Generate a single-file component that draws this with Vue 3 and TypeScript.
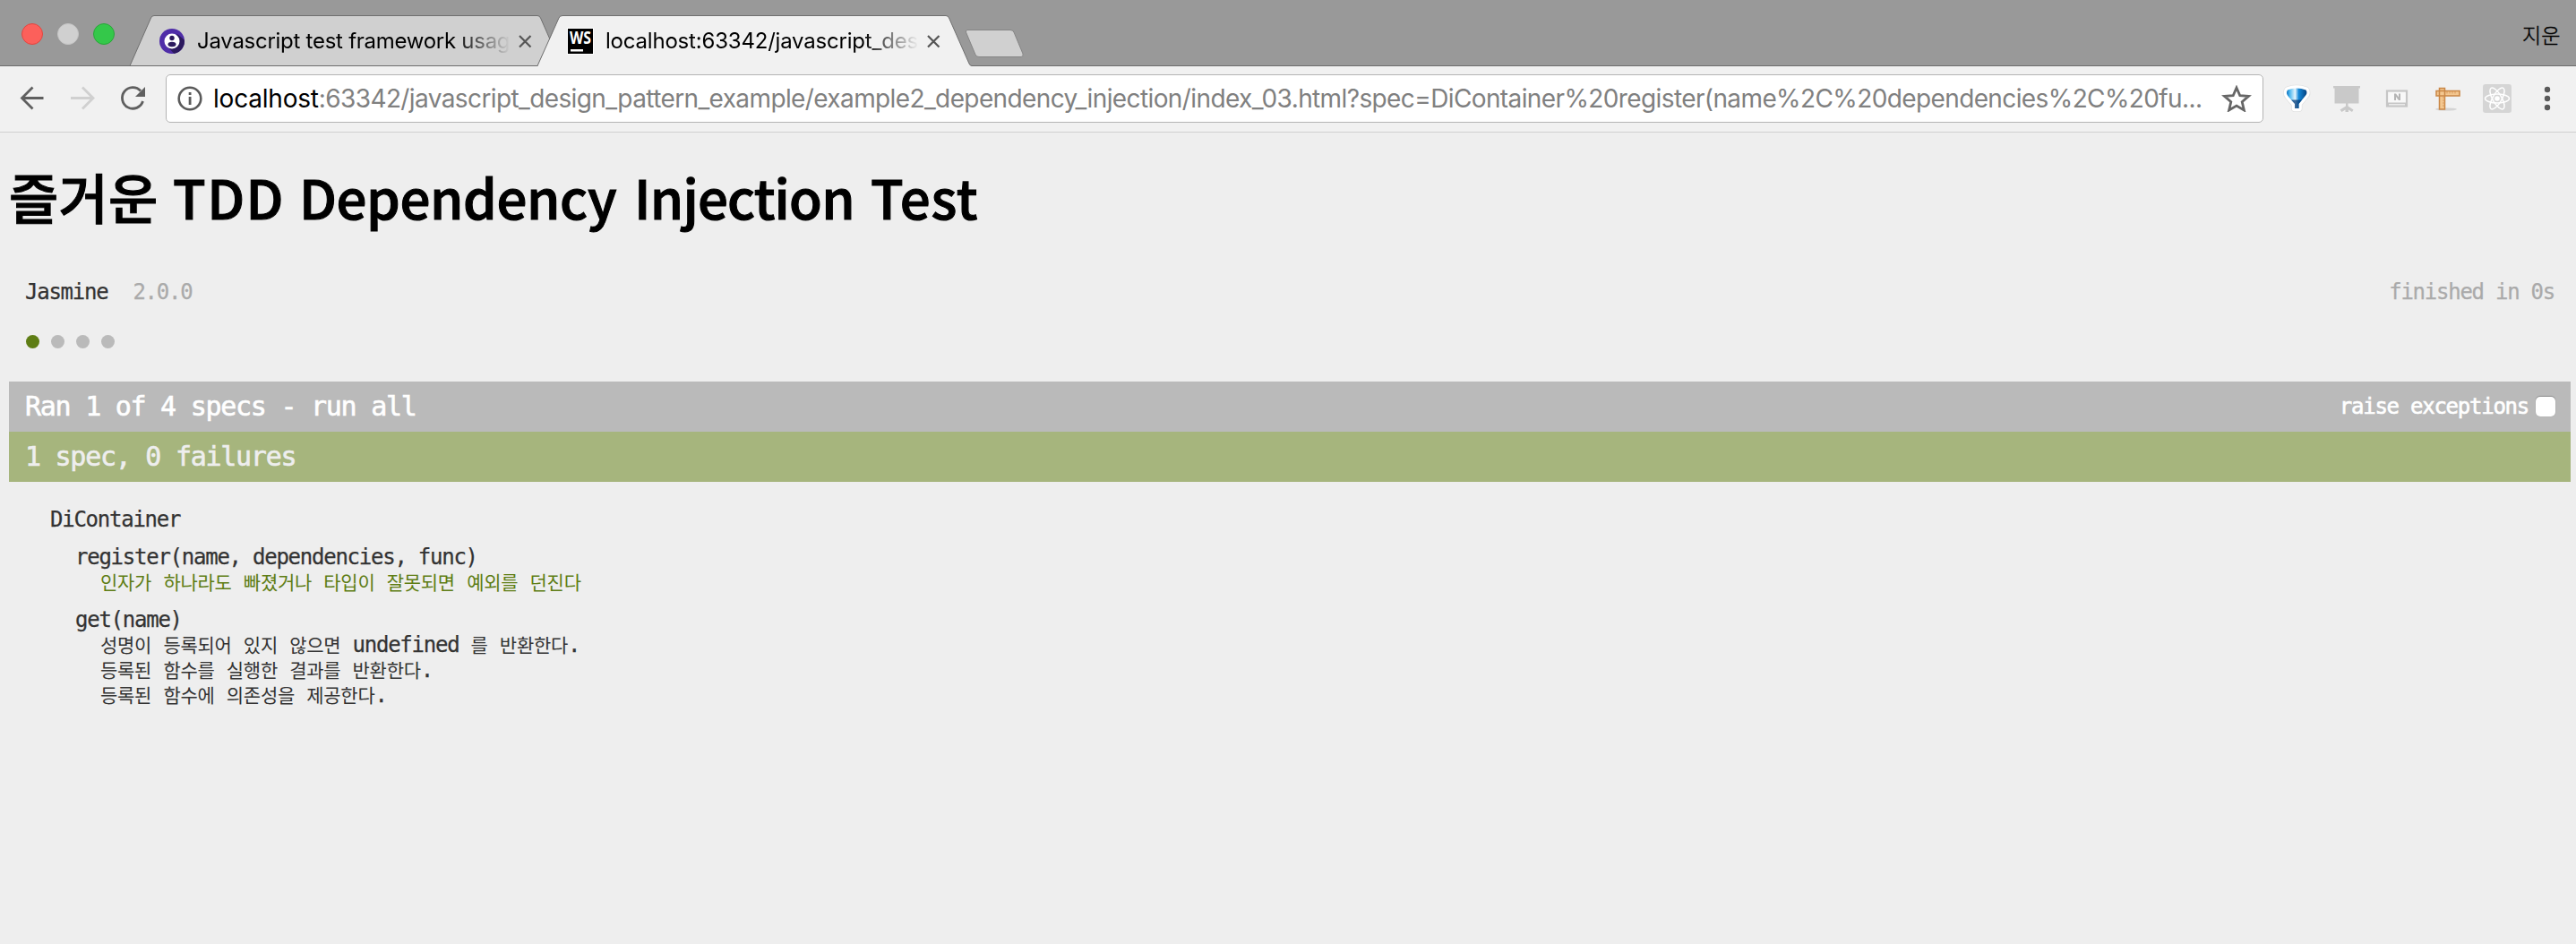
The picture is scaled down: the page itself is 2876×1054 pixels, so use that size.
<script setup lang="ts">
interface Run { text: string; hangul: boolean }
interface Spec { text: string; passed: boolean }
interface Suite { name: string; specs: Spec[] }

const suites: Suite[] = [
  {
    name: 'register(name, dependencies, func)',
    specs: [{ text: '인자가 하나라도 빠졌거나 타입이 잘못되면 예외를 던진다', passed: true }],
  },
  {
    name: 'get(name)',
    specs: [
      { text: '성명이 등록되어 있지 않으면 undefined 를 반환한다.', passed: false },
      { text: '등록된 함수를 실행한 결과를 반환한다.', passed: false },
      { text: '등록된 함수에 의존성을 제공한다.', passed: false },
    ],
  },
]

// Hangul and Latin runs are set in different faces and sizes.
function runs(text: string): Run[] {
  return (text.match(/[가-힣]+|[^가-힣]+/g) ?? []).map((t) => ({ text: t, hangul: /[가-힣]/.test(t) }))
}
</script>

<template>
  <div class="window">
    <header class="strip">
      <svg class="tabs" width="1180" height="74" viewBox="0 0 1180 74">
        <defs>
          <clipPath id="badge"><circle cx="192" cy="46" r="14" /></clipPath>
        </defs>
        <circle cx="36" cy="38" r="11.5" fill="#fc605b" stroke="#e14640" />
        <circle cx="76" cy="38" r="11.5" fill="#d0d0d0" stroke="#c4c4c4" />
        <circle cx="116" cy="38" r="11.5" fill="#34c84a" stroke="#2aa63a" />
        <path d="M145 73.5 L168.500 20 Q169.500 17.5 172 17.5 H600 Q602.500 17.5 603.500 20 L627 73.500 Z" fill="#d0d0d0" stroke="#6f6f6f" />
        <path d="M0 73.500 H602" stroke="#6c6c6c" />
        <path d="M600 74.500 L624 20 Q625 17.500 628 17.500 H1056 Q1058.500 17.500 1059.500 20 L1082 71 Q1083 73.500 1085 73.500 H1180 V74.500 Z" fill="#f1f1f1" stroke="none" />
        <path d="M600 73.500 L624 20 Q625 17.500 628 17.500 H1056 Q1058.500 17.500 1059.500 20 L1082 71 Q1083 73.500 1085 73.500 H1180" fill="none" stroke="#6f6f6f" />
        <path d="M1080 33.500 H1128 Q1131 33.500 1132 36 L1142 60 Q1143 63.500 1140 63.500 H1093 Q1090 63.500 1089 61 L1078.500 36 Q1078 33.500 1080 33.500 Z" fill="#d0d0d0" stroke="#858585" />
        <circle cx="192" cy="46" r="14" fill="#4f2da8" />
        <path clip-path="url(#badge)" d="M198 38 L212 50 V64 H198 L187 52 Z" fill="#2c1a5e" />
        <circle cx="192" cy="46" r="8.500" fill="#fff" />
        <circle cx="192" cy="42.500" r="2.700" fill="#2c1a5e" />
        <ellipse cx="192" cy="49.500" rx="4.500" ry="2.700" fill="#2c1a5e" />
        <path d="M580 40 l12.500 12.500 M592.500 40 l-12.500 12.500 M1036 40 l12.500 12.500 M1048.500 40 l-12.500 12.500" stroke="#555" stroke-width="2.200" />
        <rect x="633.500" y="31.500" width="29" height="29" fill="#000" stroke="#fff" />
        <text x="636" y="49" textLength="24" lengthAdjust="spacingAndGlyphs" class="ws">WS</text>
        <rect x="637" y="55" width="14" height="2.500" fill="#fff" />
      </svg>
      <div class="title first">Javascript test framework usage</div>
      <div class="title second">localhost:63342/javascript_design</div>
      <div class="profile">지운</div>
    </header>

    <nav class="toolbar">
      <svg class="nav" width="185" height="73" viewBox="0 74 185 73" fill="none" stroke-width="2.800">
        <path d="M48.500 109.500 H25 M36.500 97.500 L24.500 109.500 L36.500 121.500" stroke="#5f5f5f" />
        <path d="M79 109.500 H103 M92 97.500 L104 109.500 L92 121.500" stroke="#d0d0d0" />
        <path d="M159.500 113 A11.800 11.800 0 1 1 157 101.500" stroke="#5f5f5f" />
        <path d="M162 97 V108 H151 Z" fill="#5f5f5f" />
      </svg>
      <div class="omnibox">
        <svg class="info" width="28" height="28" viewBox="0 0 28 28">
          <circle cx="14" cy="14" r="12.300" fill="none" stroke="#5a5a5a" stroke-width="2.600" />
          <path d="M12.700 12 h2.800 v9 h-2.800 z M12.700 7 h2.800 v2.900 h-2.800 z" fill="#5a5a5a" />
        </svg>
        <div class="url"><b>localhost</b>:63342/javascript_design_pattern_example/example2_dependency_injection/index_03.html?spec=DiContainer%20register(name%2C%20dependencies%2C%20fu...</div>
        <svg class="star" width="36" height="30" viewBox="0 0 36 30">
          <path d="M18 3 L21.800 11.700 L31.500 12.400 L24.200 18.700 L26.400 28 L18 23.100 L9.600 28 L11.800 18.700 L4.500 12.400 L14.200 11.700 Z" fill="none" stroke="#666" stroke-width="2.800" />
        </svg>
      </div>
      <svg class="actions" width="348" height="73" viewBox="2528 74 348 73">
        <defs>
          <linearGradient id="balloon" x1="0" x2="1"><stop offset="0" stop-color="#0a6cba" /><stop offset=".15" stop-color="#4bb6ee" /><stop offset=".42" stop-color="#e3f5fd" /><stop offset=".6" stop-color="#1488d8" /><stop offset="1" stop-color="#05427f" /></linearGradient>
        </defs>
        <path d="M2554 100.500 Q2564 96.500 2574.500 100.500 Q2577 104 2573 108 L2566.500 116 V121 H2562 V116 L2555 108 Q2551.500 104 2554 100.500 Z" fill="#fff" stroke="#e2e2e2" stroke-width="8" stroke-linejoin="round" />
        <path d="M2554 100.500 Q2564 96.500 2574.500 100.500 Q2577 104 2573 108 L2566.500 116 V121 H2562 V116 L2555 108 Q2551.500 104 2554 100.500 Z" fill="#fff" stroke="#fff" stroke-width="6.500" stroke-linejoin="round" />
        <path d="M2554 100.500 Q2564 96.500 2574.500 100.500 Q2577 104 2573 108 L2566.500 116 V121 H2562 V116 L2555 108 Q2551.500 104 2554 100.500 Z" fill="url(#balloon)" />
        <path d="M2558 111.500 L2570 111.500 L2566.500 116 V121 H2562 V116 Z" fill="#073c78" opacity=".75" />
        <path d="M2605 96 h30 v2.500 h-1.500 v17 h-12 v3 l6 4 -1.500 2.500 -4 -2.500 v2.500 h-3.500 v-2.500 l-4 2.500 -2 -2.500 6.500 -4 v-3 h-12.500 v-17 h-1.500 z" fill="#c9c9c9" />
        <rect x="2665" y="101.500" width="22" height="17" fill="#f8f8f8" stroke="#c6c6c6" stroke-width="2.200" />
        <path d="M2665 114.500 h22 v4 h-22 z" fill="#c6c6c6" />
        <path d="M2667 116.800 h18" stroke="#f4f4f4" stroke-width="1.200" />
        <path d="M2673 112 V104.500 h2 l3 4 v-4 h2 V112 h-2 l-3 -4 v4 z" fill="#b5b5b5" />
        <ellipse cx="2731" cy="122" rx="12" ry="1.600" fill="#d4d4d4" />
        <path d="M2720 101.500 h26 v5.500 h-26 z M2723.500 98.500 h6 v23.500 h-6 z" fill="#f3c790" stroke="#c98746" stroke-width="1.500" />
        <path d="M2732 102 v2.500 M2735 102 v2.500 M2738 102 v2.500 M2741 102 v2.500 M2727 109 h2.500 M2727 112 h2.500 M2727 115 h2.500 M2727 118 h2.500" stroke="#d99a5c" />
        <rect x="2772" y="94" width="32" height="32" rx="3" fill="#d5d5d5" />
        <g fill="none" stroke="#fff" stroke-width="1.500">
          <ellipse cx="2788" cy="110" rx="13.500" ry="5" />
          <ellipse cx="2788" cy="110" rx="13.500" ry="5" transform="rotate(60 2788 110)" />
          <ellipse cx="2788" cy="110" rx="13.500" ry="5" transform="rotate(120 2788 110)" />
        </g>
        <circle cx="2788" cy="110" r="2.800" fill="#fff" />
        <g fill="#5a5a5a"><circle cx="2844" cy="100" r="3.200" /><circle cx="2844" cy="110" r="3.200" /><circle cx="2844" cy="120" r="3.200" /></g>
      </svg>
    </nav>

    <main class="page">
      <h1><span class="ko">즐거운</span><span class="w1">TDD</span><span class="w2">Dependency</span><span class="w3">Injection</span><span class="w4">Test</span></h1>
      <div class="banner">
        <span>Jasmine</span><span class="version">2.0.0</span><span class="duration">finished in 0s</span>
      </div>
      <div class="symbols"><i class="on"></i><i></i><i></i><i></i></div>
      <div class="bar skipped">
        <span>Ran 1 of 4 specs - run all</span>
        <label>raise exceptions<span class="check"></span></label>
      </div>
      <div class="bar passed">1 spec, 0 failures</div>
      <div class="results">
        <div class="root">DiContainer</div>
        <div v-for="s in suites" :key="s.name" class="suite">
          <div class="name">{{ s.name }}</div>
          <div v-for="p in s.specs" :key="p.text" class="spec" :class="{ ok: p.passed }"><span v-for="(r, i) in runs(p.text)" :key="i" :class="{ hangul: r.hangul }">{{ r.text }}</span></div>
        </div>
      </div>
    </main>
  </div>
</template>

<style>
html, body { background: #eee; margin: 0; overflow: hidden; }
</style>

<style scoped>
.window { width: 2876px; height: 1054px; overflow: hidden; background: #eee; }
.strip { position: relative; height: 74px; background: linear-gradient(#999 0 73px, #6c6c6c 73px); }
.tabs { display: block; }
.ws { font: 700 19px "Open Sans", sans-serif; fill: #fff; }
.title {
  position: absolute; top: 30px; height: 32px; line-height: 32px; overflow: hidden; white-space: nowrap;
  font-family: Inter, sans-serif; font-size: 24px; color: #000;
  -webkit-mask-image: linear-gradient(90deg, #000 82%, transparent 100%);
  mask-image: linear-gradient(90deg, #000 82%, transparent 100%);
}
.first { left: 220px; width: 350px; letter-spacing: -0.27px; }
.second { left: 676px; width: 350px; letter-spacing: -0.2px; }
.profile { position: absolute; left: 2816px; top: 22px; line-height: 32px; font-family: "Noto Sans CJK KR", sans-serif; font-size: 23px; font-weight: 300; -webkit-text-stroke: 0.4px #000; white-space: nowrap; }

.toolbar { display: flex; height: 73px; background: #f1f1f1; border-bottom: 1px solid #d0d0d0; }
.nav { flex: none; }
.omnibox {
  box-sizing: border-box; flex: none; display: flex; align-items: center; width: 2342px; height: 54px; margin-top: 9px;
  border: 1px solid #b4b4b4; border-radius: 5px; background: #fff;
}
.info { flex: none; margin-left: 12px; }
.url { flex: none; width: 2230px; margin-left: 12px; white-space: nowrap; font-family: Inter, sans-serif; font-size: 28px; line-height: 50px; color: #808080; letter-spacing: -0.61px; }
.url b { font-weight: 400; color: #000; letter-spacing: -0.2px; }
.star { flex: none; margin-left: 11px; }
.actions { flex: none; margin-left: 1px; }

.page { padding: 0 6px 0 10px; font-family: "DejaVu Sans Mono", monospace; font-size: 24px; letter-spacing: -1.25px; color: #333; white-space: pre; -webkit-text-stroke: 0.25px currentColor; }
h1 { display: flex; margin: 29px 0 0; height: 84px; line-height: 84px; font-family: "Noto Sans CJK KR", sans-serif; font-size: 60px; font-weight: 500; letter-spacing: 0; color: #000; -webkit-text-stroke: 1.1px #000; }
.ko { width: 183px; letter-spacing: 0.3px; }
.w1 { width: 141px; letter-spacing: 1.500px; }
.w2 { width: 374px; letter-spacing: -0.4px; }
.w3 { width: 264px; letter-spacing: -0.8px; }
.w4 { letter-spacing: 0.8px; }
.banner { display: flex; margin-top: 50px; padding: 0 18px; height: 30px; line-height: 30px; }
.version { margin-left: 28px; color: #aaa; }
.duration { margin-left: auto; color: #aaa; }
.symbols { display: flex; gap: 13px; margin: 33px 0 0 18.500px; height: 15px; }
.symbols i { width: 15px; height: 15px; border-radius: 50%; background: #bababa; }
.symbols .on { background: #5e7d14; }
.bar { display: flex; justify-content: space-between; box-sizing: border-box; height: 56px; padding: 0 17px 0 18px; font-size: 30px; letter-spacing: -1.27px; line-height: 56px; color: #eee; -webkit-text-stroke: 0.6px currentColor; }
.skipped { margin-top: 37px; background: #bababa; color: #fff; }
.passed { background: #a6b57d; }
.bar label { display: flex; align-items: center; font-size: 24px; letter-spacing: -1.25px; }
.check { width: 22px; height: 22px; margin-left: 8px; border-radius: 5px; background: #fff; box-shadow: 0 -1px 1px #8f8f8f, 0 0 1px #999; }
.results { padding: 28px 0 0 46px; line-height: 28px; }
.suite { padding: 14px 0 0 28px; }
.spec { padding-left: 28px; height: 28px; }
.ok { color: #5e7d14; }
.hangul { font-family: "Noto Sans CJK KR", sans-serif; font-size: 21px; letter-spacing: -0.26px; line-height: 20px; -webkit-text-stroke: 0; }
</style>
